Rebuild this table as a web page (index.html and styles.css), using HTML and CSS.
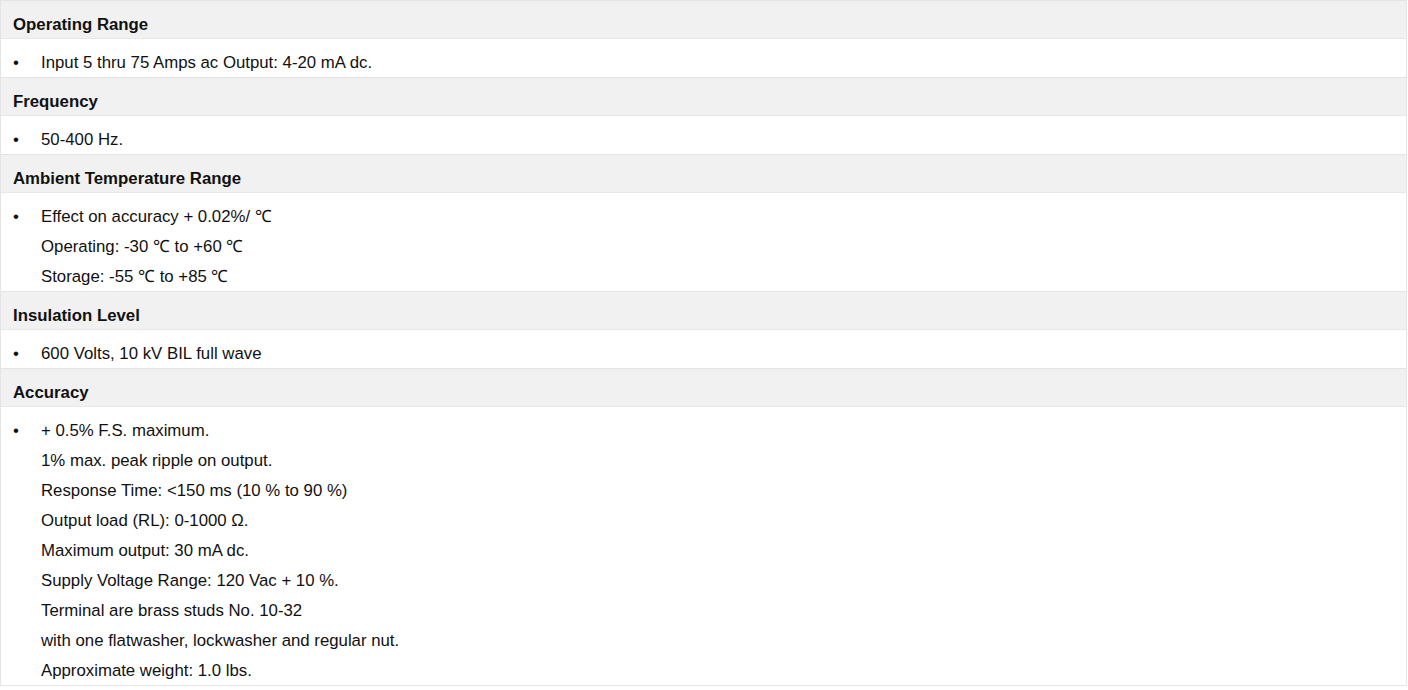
FILE: index.html
```html
<!DOCTYPE html>
<html lang="en">
<head>
<meta charset="utf-8">
<title>Specifications</title>
<link rel="stylesheet" href="styles.css">
</head>
<body>
<div class="specs">
  <div class="spec-head">Operating Range</div>
  <div class="spec-body">
    <div class="item"><span class="bullet">•</span><div class="lines"><div>Input 5 thru 75 Amps ac Output: 4-20 mA dc.</div></div></div>
  </div>

  <div class="spec-head">Frequency</div>
  <div class="spec-body">
    <div class="item"><span class="bullet">•</span><div class="lines"><div>50-400 Hz.</div></div></div>
  </div>

  <div class="spec-head">Ambient Temperature Range</div>
  <div class="spec-body">
    <div class="item"><span class="bullet">•</span><div class="lines">
      <div>Effect on accuracy + 0.02%/ ℃</div>
      <div>Operating: -30 ℃ to +60 ℃</div>
      <div>Storage: -55 ℃ to +85 ℃</div>
    </div></div>
  </div>

  <div class="spec-head">Insulation Level</div>
  <div class="spec-body">
    <div class="item"><span class="bullet">•</span><div class="lines"><div>600 Volts, 10 kV BIL full wave</div></div></div>
  </div>

  <div class="spec-head">Accuracy</div>
  <div class="spec-body">
    <div class="item"><span class="bullet">•</span><div class="lines">
      <div>+ 0.5% F.S. maximum.</div>
      <div>1% max. peak ripple on output.</div>
      <div>Response Time: &lt;150 ms (10 % to 90 %)</div>
      <div>Output load (RL): 0-1000 Ω.</div>
      <div>Maximum output: 30 mA dc.</div>
      <div>Supply Voltage Range: 120 Vac + 10 %.</div>
      <div>Terminal are brass studs No. 10-32</div>
      <div>with one flatwasher, lockwasher and regular nut.</div>
      <div>Approximate weight: 1.0 lbs.</div>
    </div></div>
  </div>
</div>
</body>
</html>
```

FILE: styles.css
```css
html, body {
  margin: 0;
  padding: 0;
  background: #ffffff;
}

body {
  font-family: "Liberation Sans", Arial, sans-serif;
  font-size: 16.8px;
  color: #111111;
}

.specs {
  width: 1407px;
  box-sizing: border-box;
  border: 1px solid #e4e4e4;
  display: flex;
  flex-direction: column;
}

.spec-head {
  background: #f1f1f1;
  font-weight: bold;
  line-height: 27px;
  padding: 10px 12px 0 12px;
  border-bottom: 1px solid #e8e8e8;
}

.spec-body {
  background: #ffffff;
  line-height: 30px;
  padding: 9px 12px 0 12px;
  border-bottom: 1px solid #e4e4e4;
}

.spec-body:last-child {
  border-bottom: none;
}

.item {
  display: flex;
  margin-bottom: -1px;
}

.bullet {
  width: 28px;
  flex: none;
}

.lines {
  display: flex;
  flex-direction: column;
}
```
